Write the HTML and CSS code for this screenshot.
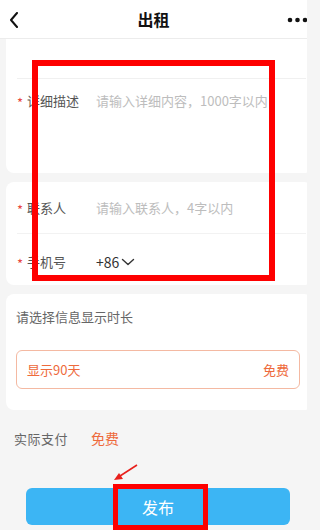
FILE: index.html
```html
<!DOCTYPE html>
<html lang="zh-CN">
<head>
<meta charset="utf-8">
<title>出租</title>
<link rel="stylesheet" href="styles.css">
</head>
<body>
<div class="page">
  <header class="topbar">
    <svg class="back" width="10" height="16" viewBox="0 0 10 16"><path d="M8 1 L2 8 L8 15" fill="none" stroke="#111" stroke-width="2" stroke-linecap="round" stroke-linejoin="round"/></svg>
    <div class="title">出租</div>
    <svg class="more" width="22" height="6" viewBox="0 0 22 6"><circle cx="3" cy="3" r="2.3" fill="#111"/><circle cx="10.5" cy="3" r="2.3" fill="#111"/><circle cx="18" cy="3" r="2.3" fill="#111"/></svg>
  </header>

  <main class="content">
    <section class="card card-first">
      <div class="row row-blank"></div>
      <div class="row row-area">
        <span class="star">*</span><span class="label">详细描述</span>
        <span class="placeholder">请输入详细内容，1000字以内</span>
      </div>
    </section>

    <section class="card">
      <div class="row row-line">
        <span class="star">*</span><span class="label">联系人</span>
        <span class="placeholder">请输入联系人，4字以内</span>
      </div>
      <div class="row row-phone">
        <span class="star">*</span><span class="label">手机号</span>
        <span class="code">+86</span>
        <svg class="caret" width="14" height="8" viewBox="0 0 14 8"><path d="M1.5 1.5 L7 6.5 L12.5 1.5" fill="none" stroke="#333" stroke-width="1.4" stroke-linecap="round" stroke-linejoin="round"/></svg>
      </div>
    </section>

    <section class="card card-duration">
      <div class="dur-title">请选择信息显示时长</div>
      <div class="option">
        <span>显示90天</span>
        <span>免费</span>
      </div>
    </section>

    <div class="pay">
      <span class="pay-label">实际支付</span>
      <span class="pay-value">免费</span>
    </div>

    <div class="btn-wrap">
      <div class="btn">发布</div>
    </div>
  </main>

  <div class="mark mark-form"></div>
  <div class="mark mark-btn"></div>
  <svg class="arrow" width="30" height="22" viewBox="0 0 30 22"><path d="M25 2 L8 13" stroke="#e8201c" stroke-width="1.6" fill="none"/><path d="M2 17 L11 16 L7 10 Z" fill="#e8201c"/></svg>
</div>
</body>
</html>
```

FILE: styles.css
```css
* { box-sizing: border-box; }
html, body { margin: 0; padding: 0; }
body {
  width: 307px;
  height: 530px;
  overflow: hidden;
  background: #f5f5f5;
  font-family: "Noto Sans CJK SC", "Noto Sans", sans-serif;
  color: #333;
}
.page { position: relative; width: 307px; height: 530px; overflow: hidden; }

.topbar {
  height: 39px;
  background: #fff;
  border-bottom: 1px solid #ececec;
  display: flex;
  align-items: center;
  justify-content: space-between;
  padding: 0 0 0 9px;
  position: relative;
}
.back { margin-top: 1px; }
.title {
  position: absolute;
  left: 0; right: 0;
  text-align: center;
  font-size: 16px;
  font-weight: 700;
  color: #111;
  line-height: 20px;
  pointer-events: none;
}
.more { margin-right: -2px; margin-top: 2px; }

.content { padding-left: 6px; }

.card {
  width: 306px;
  background: #fff;
  border-radius: 8px;
  margin-bottom: 9px;
}
.card-first { border-radius: 0 0 8px 8px; height: 134px; margin-bottom: 9px; }

.row {
  display: flex;
  align-items: center;
  margin-left: 11px;
  font-size: 13px;
  line-height: 18px;
}
.row-blank { height: 40px; border-bottom: 1px solid #f0f0f0; margin-right: 6px; }
.row-area { align-items: flex-start; padding-top: 13px; }
.row-line { height: 52px; border-bottom: 1px solid #f2f2f2; margin-right: 6px; padding-top: 1px; }
.row-phone { height: 51px; padding-top: 4px; }

.star { color: #e8483f; width: 10px; font-size: 13px; position: relative; top: 2px; }
.label { width: 69px; color: #555; letter-spacing: 0; }
.placeholder { color: #bdbdbd; }
.code { color: #333; font-size: 14px; }
.caret { margin-left: 2px; margin-top: 1px; }

.card-duration { padding: 14px 0 21px 10px; margin-bottom: 0; }
.dur-title { color: #666; font-size: 13px; line-height: 18px; }
.option {
  margin-top: 24px;
  width: 284px;
  height: 39px;
  border: 1px solid #f4b9a2;
  border-radius: 6px;
  display: flex;
  align-items: center;
  justify-content: space-between;
  padding: 0 10px 0 10px;
  color: #ee6a3c;
  font-size: 13px;
}

.pay {
  display: flex;
  align-items: center;
  padding: 0 0 0 8px;
  height: 56px;
}
.pay-label { color: #666; font-size: 13px; letter-spacing: 0.5px; width: 77px; }
.pay-value { color: #ee6a3c; font-size: 14px; }

.btn-wrap { padding: 22px 0 0 20px; }
.btn {
  width: 264px;
  height: 37px;
  border-radius: 6px;
  background: #3cb5f4;
  color: #fff;
  font-size: 16px;
  display: flex;
  align-items: center;
  justify-content: center;
}

.mark { position: absolute; border: 6px solid #fe0000; }
.mark-form { left: 32px; top: 60px; width: 243px; height: 221px; }
.mark-btn { left: 113px; top: 484px; width: 95px; height: 46px; border-width: 5.5px; }
.arrow { position: absolute; left: 112px; top: 463px; }
```
